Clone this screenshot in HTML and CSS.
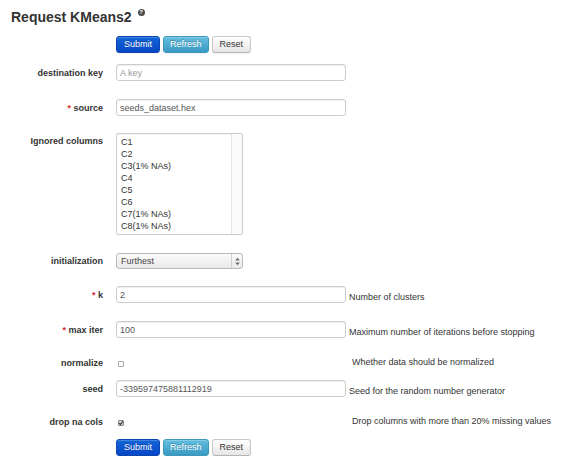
FILE: index.html
```html
<!DOCTYPE html>
<html>
<head>
<meta charset="utf-8">
<title>Request KMeans2</title>
<link rel="stylesheet" href="styles.css">
</head>
<body>
<div class="page">
  <h2 class="title">Request KMeans2<span class="q-icon">?</span></h2>
  <div class="actions">
    <button class="btn btn-primary" type="button">Submit</button>
    <button class="btn btn-info" type="button">Refresh</button>
    <button class="btn" type="button">Reset</button>
  </div>
  <form class="form">
    <div class="group">
      <label class="label">destination key</label>
      <input class="text" type="text" placeholder="A key">
    </div>
    <div class="group">
      <label class="label"><span class="req">*</span> source</label>
      <input class="text" type="text" value="seeds_dataset.hex">
    </div>
    <div class="group group-list">
      <label class="label label-top">Ignored columns</label>
      <div class="listbox">
        <div class="options">
          <div>C1</div>
          <div>C2</div>
          <div>C3(1% NAs)</div>
          <div>C4</div>
          <div>C5</div>
          <div>C6</div>
          <div>C7(1% NAs)</div>
          <div>C8(1% NAs)</div>
        </div>
        <div class="scroll-track"></div>
      </div>
    </div>
    <div class="group">
      <label class="label">initialization</label>
      <div class="popup">
        <span class="popup-text">Furthest</span>
        <span class="popup-arrows"><svg width="5" height="9" viewBox="0 0 5 9"><polygon points="0.3,3.6 2.5,0.8 4.7,3.6" fill="#666"/><polygon points="0.3,5.4 2.5,8.2 4.7,5.4" fill="#666"/></svg></span>
      </div>
    </div>
    <div class="group group-after-select">
      <label class="label"><span class="req">*</span> k</label>
      <input class="text" type="text" value="2">
      <span class="help">Number of clusters</span>
    </div>
    <div class="group">
      <label class="label"><span class="req">*</span> max iter</label>
      <input class="text" type="text" value="100">
      <span class="help">Maximum number of iterations before stopping</span>
    </div>
    <div class="group group-check">
      <label class="label">normalize</label>
      <div class="check-cell"><span class="checkbox"></span></div>
      <span class="help help-check">Whether data should be normalized</span>
    </div>
    <div class="group">
      <label class="label">seed</label>
      <input class="text" type="text" value="-339597475881112919">
      <span class="help">Seed for the random number generator</span>
    </div>
    <div class="group group-check">
      <label class="label">drop na cols</label>
      <div class="check-cell"><span class="checkbox checked"><svg width="6" height="6" viewBox="0 0 6 6"><path d="M1.2 3 L2.5 4.4 L4.9 1.3" fill="none" stroke="#333" stroke-width="1.1"/></svg></span></div>
      <span class="help help-check">Drop columns with more than 20% missing values</span>
    </div>
  </form>
  <div class="actions actions-bottom">
    <button class="btn btn-primary" type="button">Submit</button>
    <button class="btn btn-info" type="button">Refresh</button>
    <button class="btn" type="button">Reset</button>
  </div>
</div>
</body>
</html>
```
FILE: styles.css
```css
html, body {
  margin: 0;
  padding: 0;
  background: #fff;
}

body {
  font-family: "Liberation Sans", Arial, Helvetica, sans-serif;
  font-size: 9px;
  color: #333;
}

.page {
  width: 585px;
}

.title {
  display: flex;
  align-items: flex-start;
  margin: 9px 0 0 11px;
  font-size: 14px;
  line-height: 16px;
  font-weight: bold;
  color: #333;
}

.q-icon {
  width: 7px;
  height: 7px;
  margin: 0 0 0 6px;
  border-radius: 50%;
  background: #4a4a4a;
  color: #fff;
  font-size: 6px;
  line-height: 7px;
  text-align: center;
  font-weight: bold;
}

.actions {
  display: flex;
  gap: 3px;
  margin-top: 11px;
  padding-left: 116px;
}

.actions-bottom {
  margin-top: 10px;
}

.btn {
  box-sizing: border-box;
  height: 17px;
  padding: 0 7px;
  font-family: "Liberation Sans", Arial, sans-serif;
  font-size: 9px;
  line-height: 15px;
  color: #333;
  border: 1px solid #c8c8c8;
  border-bottom-color: #b3b3b3;
  border-radius: 3px;
  background: linear-gradient(#ffffff, #e6e6e6);
  box-shadow: inset 0 1px 0 rgba(255,255,255,.2), 0 1px 1px rgba(0,0,0,.05);
}

.btn-primary {
  color: #fff;
  border-color: #0b46b4;
  background: linear-gradient(#1267d8, #0746c6);
  text-shadow: 0 -1px 0 rgba(0,0,0,.25);
}

.btn-info {
  padding: 0 6px;
  color: #fff;
  border-color: #3c98ba;
  background: linear-gradient(#63bfe0, #3a9ac2);
  text-shadow: 0 -1px 0 rgba(0,0,0,.25);
}

.form {
  margin: 11px 0 0 0;
}

.group {
  display: flex;
  align-items: center;
}

.group + .group {
  margin-top: 18px;
}

.group + .group-list {
  margin-top: 17px;
}

.group + .group-after-select {
  margin-top: 17px;
}

.group-check {
  height: 14px;
}

.group-check + .group {
  margin-top: 10px;
}

.group-list {
  align-items: flex-start;
}

.label {
  flex: none;
  width: 103px;
  margin-right: 13px;
  text-align: right;
  font-weight: bold;
  line-height: 12px;
  color: #333;
}

.label-top {
  padding-top: 2px;
}

.req {
  color: #d62c2c;
}

.text {
  box-sizing: border-box;
  width: 230px;
  height: 17px;
  margin: 0;
  padding: 0 3px;
  font-family: "Liberation Sans", Arial, sans-serif;
  font-size: 9px;
  color: #555;
  border: 1px solid #cccccc;
  border-radius: 3px;
  background: #fff;
  box-shadow: inset 0 1px 1px rgba(0,0,0,.075);
  outline: none;
}

.text::placeholder {
  color: #999;
}

.help {
  align-self: flex-end;
  margin-left: 3px;
  line-height: 12px;
  color: #333;
}

.help-check {
  align-self: flex-start;
  margin-left: 0;
}

.listbox {
  box-sizing: border-box;
  display: flex;
  width: 127px;
  height: 102px;
  border: 1px solid #cccccc;
  border-radius: 2px;
  background: #fff;
  box-shadow: inset 0 1px 1px rgba(0,0,0,.05);
}

.options {
  flex: 1;
  padding: 2px 0 0 4px;
  line-height: 12.07px;
  color: #333;
}

.scroll-track {
  width: 10px;
  border-left: 1px solid #e3e3e3;
  background: #fbfbfb;
}

.popup {
  box-sizing: border-box;
  display: flex;
  align-items: center;
  width: 127px;
  height: 16px;
  border: 1px solid #b9b9b9;
  border-radius: 3px;
  background: linear-gradient(#fbfbfb, #e9e9e9);
}

.popup-text {
  flex: 1;
  padding-left: 4px;
  color: #444;
  line-height: 14px;
}

.popup-arrows {
  display: flex;
  align-items: center;
  justify-content: center;
  width: 10px;
  height: 14px;
  border-left: 1px solid #d0d0d0;
}

.popup-arrows svg {
  display: block;
}

.check-cell {
  flex: none;
  display: flex;
  align-items: center;
  width: 236px;
  height: 14px;
}

.checkbox {
  box-sizing: border-box;
  display: block;
  width: 6px;
  height: 6px;
  margin: 1px 0 0 2px;
  border: 1px solid #a8a8a8;
  border-radius: 1px;
  background: #fff;
}

.checkbox.checked {
  border-color: #888;
  background: #d8d8d8;
  position: relative;
}

.checkbox.checked svg {
  position: absolute;
  left: -1px;
  top: -1px;
}
```
